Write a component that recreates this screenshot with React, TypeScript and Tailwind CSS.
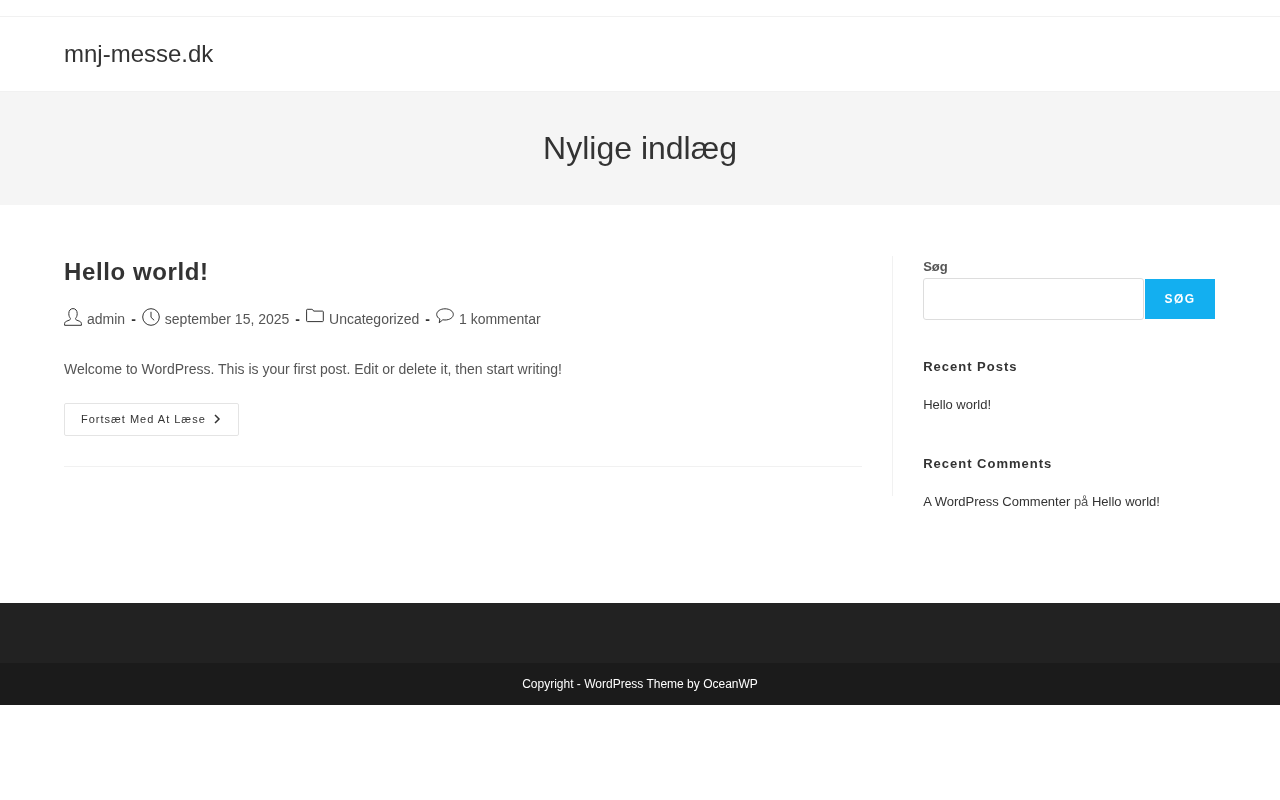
const iconClass = 'w-[18px] h-[18px] fill-none stroke-[#333] stroke-[1] shrink-0';

function UserIcon() {
  return (
    <svg viewBox="0 0 18 18" className={iconClass}>
      <path d="M.6 17.300v-1.700c0-1.300 1-2 2.200-2.500l2.600-1c.9-.4 1.200-1 1-1.800C5.500 9.300 4.800 7.900 4.800 5.600 4.800 2.500 6.500.6 9 .6s4.200 1.900 4.200 5c0 2.300-.7 3.700-1.600 4.700-.2.800.1 1.400 1 1.800l2.600 1c1.200.5 2.200 1.200 2.200 2.500v1.700z" />
    </svg>
  );
}

function ClockIcon() {
  return (
    <svg viewBox="0 0 18 18" className={iconClass}>
      <circle cx="9" cy="9" r="8.300" />
      <path d="M9 3.800V9.300l3.200 3" />
    </svg>
  );
}

function FolderIcon() {
  return (
    <svg viewBox="0 0 18 18" className={iconClass}>
      <path d="M.6 3.100V2.100c0-.5.300-.8.800-.8h4.500c.5 0 .7.200 1 .6l.7 1.200h8.900c.5 0 .8.300.8.800v8.900c0 .5-.3.800-.8.800H1.400c-.5 0-.8-.3-.8-.8z" />
    </svg>
  );
}

function CommentIcon() {
  return (
    <svg viewBox="0 0 18 18" className={iconClass}>
      <path d="M9 .8c4.600 0 8.300 2.400 8.300 5.600S13.600 12 9 12c-.8 0-1.500-.1-2.200-.2L3.200 14.800l.7-3.800C1.900 10 .7 8.300.7 6.400.7 3.200 4.400.8 9 .8z" />
    </svg>
  );
}

function Dash() {
  return <span className="font-bold text-[#333] mx-1.5 mt-px leading-5">-</span>;
}

function MetaText({ children }: { children: string }) {
  return <span className="ml-[5px] mt-px leading-5">{children}</span>;
}

function WidgetTitle({ children }: { children: string }) {
  return <h4 className="text-[13px] font-bold tracking-[1px] leading-[20px] text-[#333]">{children}</h4>;
}

export default function App() {
  return (
    <div className="font-['Liberation_Sans',Arial,sans-serif] text-[#555] min-h-[800px] will-change-transform">
      {/* Top bar */}
      <div className="h-[17px] border-b border-[#f1f1f1]" />

      {/* Header */}
      <header className="h-[75px] border-b border-[#f1f1f1] px-16 flex items-center">
        <a className="text-[24px] leading-[74px] text-[#333]">mnj-messe.dk</a>
      </header>

      {/* Page title */}
      <div className="h-[113px] bg-[#f5f5f5] flex items-center justify-center pb-0.5">
        <h1 className="text-[32px] leading-[44px] text-[#333]">Nylige indlæg</h1>
      </div>

      {/* Content */}
      <main className="flex px-16 pt-[51px] h-[398px]">
        <section className="w-[798px] h-[211px]">
          <h2 className="text-[24px] font-bold tracking-[0.6px] leading-[32px] text-[#333]">Hello world!</h2>
          <div className="flex items-start mt-[20px] h-[24px] text-[14px] text-[#555]">
            <UserIcon />
            <MetaText>admin</MetaText>
            <Dash />
            <ClockIcon />
            <MetaText>september 15, 2025</MetaText>
            <Dash />
            <FolderIcon />
            <MetaText>Uncategorized</MetaText>
            <Dash />
            <CommentIcon />
            <MetaText>1 kommentar</MetaText>
          </div>
          <p className="mt-[26px] text-[14px] leading-[22px] text-[#555]">
            Welcome to WordPress. This is your first post. Edit or delete it, then start writing!
          </p>
          <a className="mt-[23px] inline-flex items-center h-[33px] pl-4 w-[175px] border border-[#e4e4e4] rounded-[2px] text-[11px] tracking-[1px] text-[#333]">
            Fortsæt Med At Læse
            <svg viewBox="0 0 10 10" className="w-2.5 h-2.5 ml-[6px] -mt-px fill-none stroke-[#333] stroke-[1.5]">
              <path d="M3 1l4 4-4 4" />
            </svg>
          </a>
          <div className="mt-[30px] border-b border-[#f1f1f1]" />
        </section>

        <div className="ml-[30px] w-px h-[240px] bg-[#f1f1f1]" />

        <aside className="ml-[30.44px] w-[293px] text-[13px] text-[#333]">
          <label className="block text-[13px] font-bold leading-[20px] text-[#555] mt-px mb-px">Søg</label>
          <div className="flex items-center">
            <div className="w-[221px] h-[42px] border border-[#ddd] rounded-[3px] bg-white" />
            <button className="ml-px w-[70px] h-10 bg-[#13aff0] text-white text-[12px] font-bold tracking-[1.500px]">SØG</button>
          </div>
          <div className="mt-[37px]">
            <WidgetTitle>Recent Posts</WidgetTitle>
            <p className="mt-[18px] leading-[20px]">Hello world!</p>
          </div>
          <div className="mt-[39px]">
            <WidgetTitle>Recent Comments</WidgetTitle>
            <p className="mt-[18px] leading-[20px]">
              A WordPress Commenter <span className="text-[#555]">på</span> Hello world!
            </p>
          </div>
        </aside>
      </main>

      {/* Footer */}
      <div className="h-[60px] bg-[#222]" />
      <footer className="h-[42px] bg-[#1b1b1b] flex items-center justify-center text-[12px] text-white">
        Copyright - WordPress Theme by OceanWP
      </footer>
    </div>
  );
}
